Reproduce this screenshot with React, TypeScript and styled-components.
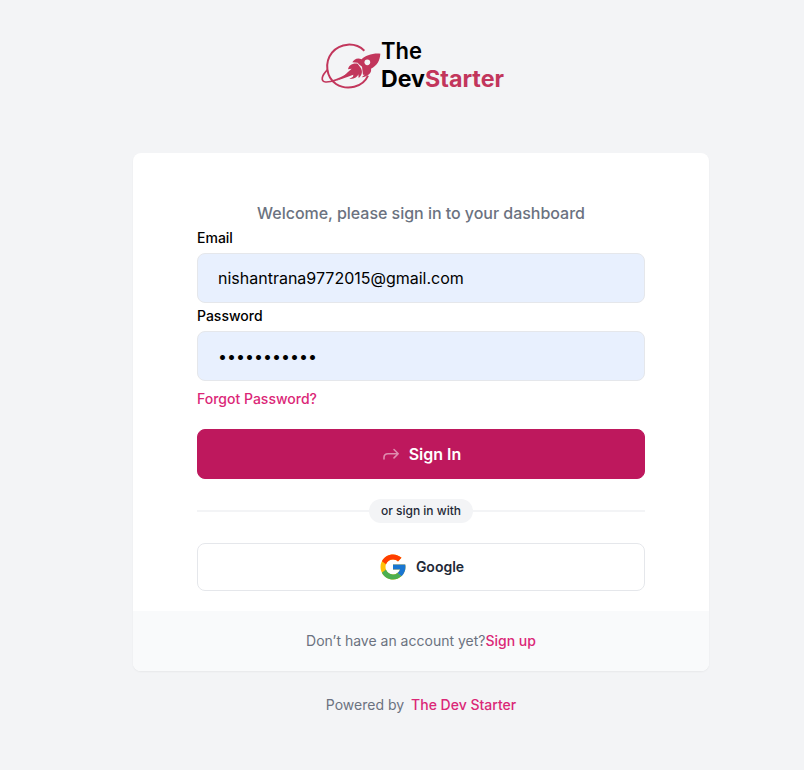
import React from 'react';
import styled, { createGlobalStyle } from 'styled-components';

const GlobalStyle = createGlobalStyle`
  *, *::before, *::after { box-sizing: border-box; }
  body { margin: 0; background: #f3f4f6; font-family: Inter, sans-serif; font-size: 14px; line-height: 20px; color: #000; overflow: hidden; }
`;
const Page = styled.main`
  width: 576px;
  min-height: 770px;
  margin-left: 133px;
  padding-top: 36px;
  display: flex;
  flex-direction: column;
  align-items: center;
`;
const Logo = styled.svg`
  display: block;
  width: 208px;
  height: 60px;
  flex: none;
  margin-bottom: 57px;
`;
const Card = styled.section`
  width: 100%;
  background: #fff;
  border-radius: 8px;
  overflow: hidden;
  box-shadow: 0 1px 2px rgba(0, 0, 0, 0.05);
`;
const Form = styled.form`
  display: flex;
  flex-direction: column;
  height: 458px;
  padding: 48px 64px 20px;
`;
const Heading = styled.h1`
  margin: 0 0 3px;
  font-size: 16px;
  line-height: 24px;
  font-weight: 500;
  letter-spacing: -0.03px;
  text-align: center;
  color: #6b7280;
`;
const Label = styled.label`
  font-weight: 500;
  line-height: 20px;
  margin-bottom: 5px;
`;
const Field = styled.input`
  width: 100%;
  height: 50px;
  flex: none;
  padding: 0 20px;
  margin: 0 0 3px;
  border: 1px solid #e5e7eb;
  border-radius: 8px;
  background: #e8f0fe;
  color: #000;
  font: 400 16px/24px Inter, sans-serif;
  outline: none;
`;
const Link = styled.a`
  font-weight: 500;
  color: #db2777;
  text-decoration: none;
`;
const Forgot = styled(Link)`
  align-self: flex-start;
  margin: 5px 0 20px;
`;
const Button = styled.button`
  display: flex;
  align-items: center;
  justify-content: center;
  width: 100%;
  flex: none;
  padding: 0;
  border-radius: 8px;
  font-family: inherit;
  font-weight: 600;
`;
const SubmitButton = styled(Button)`
  gap: 9px;
  height: 50px;
  padding-left: 1px;
  border: 1px solid #be185d;
  background: #be185d;
  color: #fff;
  font-size: 16px;
`;
const GoogleButton = styled(Button)`
  gap: 8px;
  height: 48px;
  border: 1px solid #e5e7eb;
  background: #fff;
  color: #1f2937;
  font-size: 14px;
  line-height: 20px;
  padding-bottom: 1px;
`;
const Divider = styled.div`
  display: flex;
  align-items: center;
  margin: 20px 0;
  &::before, &::after { content: ''; flex: 1; height: 2px; background: #f3f4f6; }
`;
const Pill = styled.span`
  height: 24px;
  padding: 0 12px;
  border-radius: 12px;
  background: #f3f4f6;
  color: #1f2937;
  font-size: 12px;
  line-height: 24px;
  font-weight: 500;
`;
const CardFooter = styled.footer`
  height: 60px;
  padding: 20px;
  background: #f9fafb;
  text-align: center;
  color: #6b7280;
`;
const Powered = styled.p`
  display: flex;
  gap: 7px;
  margin: 24px 0 0;
  color: #6b7280;
`;

function BrandLogo() {
  return (
    <Logo viewBox="0 0 208 60" role="img" aria-label="The DevStarter">
      <g transform="translate(-5 -4) scale(.33333)" fill="none" stroke="#c2365c">
        <path d="M157 56C130 30 84 32 60 62C37 91 42 136 72 156C105 177 153 166 168 131" strokeWidth="6" />
        <path d="M47 113C28 131 25 149 41 150C58 151 88 138 110 126" strokeWidth="5" />
        <g fill="#c2365c" stroke="none">
          <path d="M205 65C181 63 159 71 149 82C137 75 125 82 121 91L137 92L141 97L150 104L153 128L158 128L149 136C168 133 180 122 177 110C195 101 204 85 205 65Z" />
          <path d="M137 95C119 93 110 102 108 112L119 110L108 120L92 135L72 147L108 134L124 128L123 134L112 141C128 142 136 135 139 127L140 138C151 131 152 118 147 109Z" />
        </g>
        <circle cx="166" cy="91" r="8.5" fill="#f3f4f6" stroke="none" />
      </g>
      <g fontFamily="Inter, sans-serif" fontSize="22.5">
        <text x="64" y="23" fontWeight="600" textLength="41" lengthAdjust="spacingAndGlyphs">The</text>
        <text x="64" y="50.5" fontWeight="700" textLength="44" lengthAdjust="spacingAndGlyphs">Dev</text>
        <text x="108" y="50.5" fontWeight="700" fill="#c2365c" textLength="79" lengthAdjust="spacingAndGlyphs">Starter</text>
      </g>
    </Logo>
  );
}

function ForwardIcon() {
  return (
    <svg width="18" height="18" viewBox="0 0 18 18" fill="none" stroke="#fff" strokeOpacity=".5" strokeWidth="1.6" strokeLinecap="round" strokeLinejoin="round">
      <path d="M2 14V12.5Q2 8.7 6 8.7H16.2M12 4.5L16.2 8.7L12 12.9" />
    </svg>
  );
}

function GoogleIcon() {
  return (
    <svg width="30" height="30" viewBox="0 0 48 48">
      <path fill="#FFC107" d="M43.611 20.083H42V20H24v8h11.303C33.654 32.657 29.223 36 24 36c-6.627 0-12-5.373-12-12s5.373-12 12-12c3.059 0 5.842 1.154 7.961 3.039l5.657-5.657C34.046 6.053 29.268 4 24 4 12.955 4 4 12.955 4 24s8.955 20 20 20 20-8.955 20-20c0-1.341-.138-2.65-.389-3.917z" />
      <path fill="#FF3D00" d="m6.306 14.691 6.571 4.819C14.655 15.108 18.961 12 24 12c3.059 0 5.842 1.154 7.961 3.039l5.657-5.657C34.046 6.053 29.268 4 24 4 16.318 4 9.656 8.337 6.306 14.691z" />
      <path fill="#4CAF50" d="M24 44c5.166 0 9.86-1.977 13.409-5.192l-6.19-5.238A11.91 11.91 0 0 1 24 36c-5.202 0-9.619-3.317-11.283-7.946l-6.522 5.025C9.505 39.556 16.227 44 24 44z" />
      <path fill="#1976D2" d="M43.611 20.083H42V20H24v8h11.303a12.04 12.04 0 0 1-4.087 5.571l6.193 5.237C36.971 39.205 44 34 44 24c0-1.341-.138-2.65-.389-3.917z" />
    </svg>
  );
}

export default function App() {
  return (
    <>
      <GlobalStyle />
      <Page>
        <BrandLogo />
        <Card>
          <Form onSubmit={(e) => e.preventDefault()}>
            <Heading>Welcome, please sign in to your dashboard</Heading>
            <Label htmlFor="email">Email</Label>
            <Field id="email" type="email" defaultValue="nishantrana9772015@gmail.com" />
            <Label htmlFor="password">Password</Label>
            <Field id="password" type="password" defaultValue="password123" />
            <Forgot href="#">Forgot Password?</Forgot>
            <SubmitButton type="submit"><ForwardIcon />Sign In</SubmitButton>
            <Divider><Pill>or sign in with</Pill></Divider>
            <GoogleButton type="button"><GoogleIcon />Google</GoogleButton>
          </Form>
          <CardFooter>Don’t have an account yet?<Link href="#">Sign up</Link></CardFooter>
        </Card>
        <Powered>Powered by <Link href="#">The Dev Starter</Link></Powered>
      </Page>
    </>
  );
}
